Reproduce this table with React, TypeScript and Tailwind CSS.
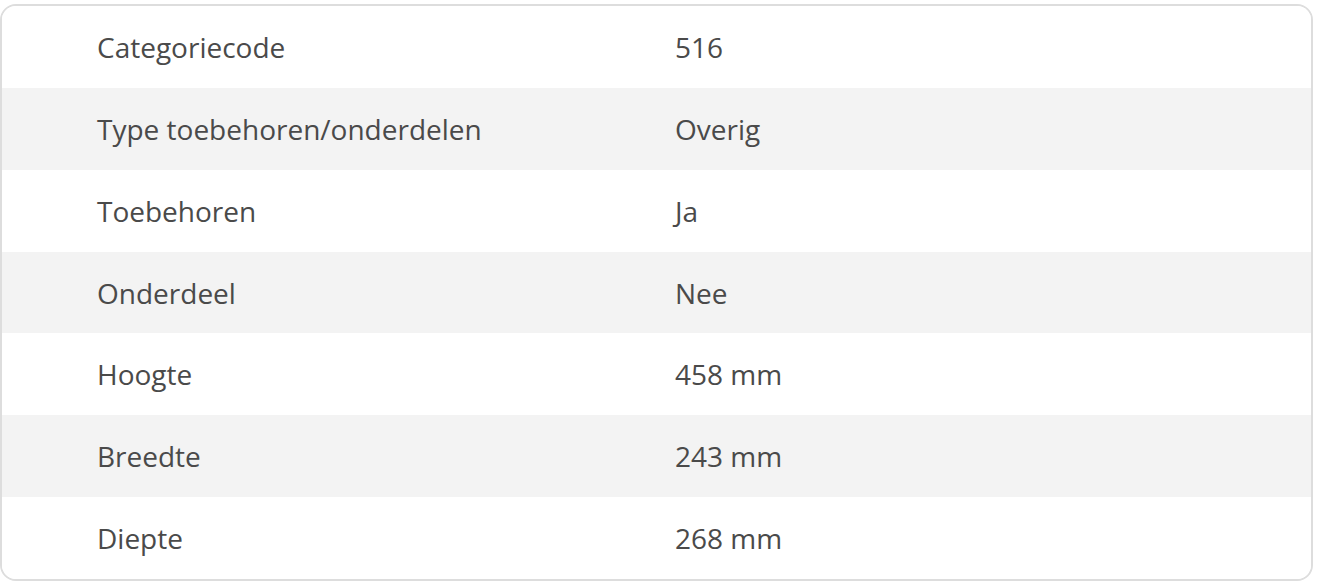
const specs = [
  ['Categoriecode', '516'],
  ['Type toebehoren/onderdelen', 'Overig'],
  ['Toebehoren', 'Ja'],
  ['Onderdeel', 'Nee'],
  ['Hoogte', '458 mm'],
  ['Breedte', '243 mm'],
  ['Diepte', '268 mm'],
];

export default function App() {
  return (
    <div className="w-[1318px] h-[586px] bg-white pt-[4px] pr-[5px] font-['Open_Sans',sans-serif]">
      <div className="h-[577px] border-2 border-[#dddddd] rounded-[16px] overflow-hidden">
        {specs.map(([label, value], i) => (
          <div
            key={label}
            className={`grid grid-cols-[578px_1fr] items-center h-[81.86px] text-[28px] text-[#4a4a4a] ${
              i % 2 === 1 ? 'bg-[#f3f3f3]' : 'bg-white'
            }`}
          >
            <div className="pl-[95px]">{label}</div>
            <div className="pl-[95px]">{value}</div>
          </div>
        ))}
      </div>
    </div>
  );
}
